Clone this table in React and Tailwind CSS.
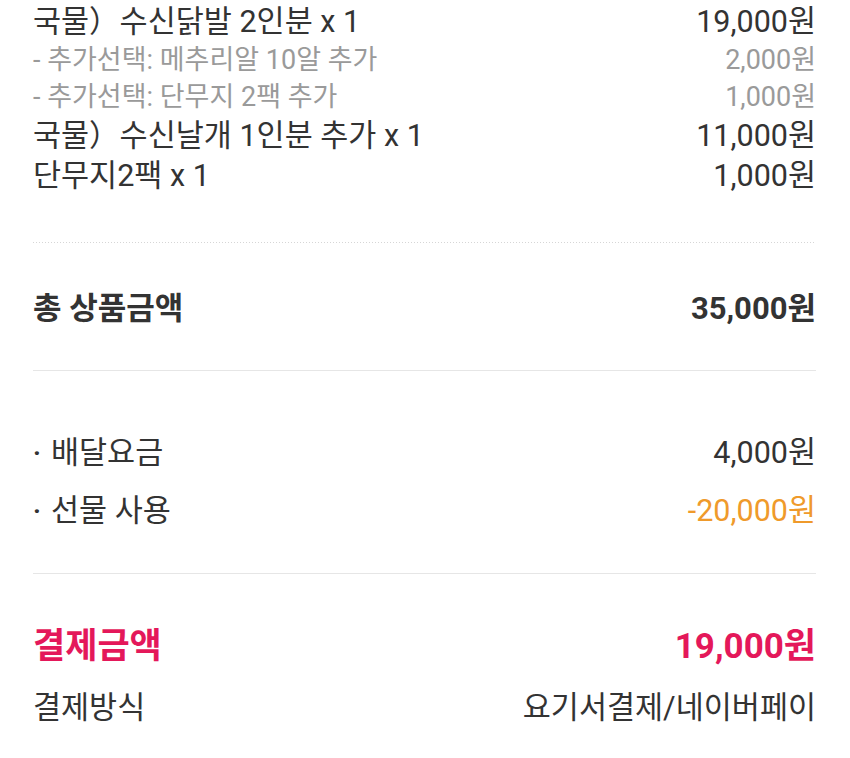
import React from 'react';

const items = [
  { name: '국물）수신닭발 2인분 x 1', price: '19,000원', options: [
    { name: '- 추가선택: 메추리알 10알 추가', price: '2,000원' },
    { name: '- 추가선택: 단무지 2팩 추가', price: '1,000원' },
  ] },
  { name: '국물）수신날개 1인분 추가 x 1', price: '11,000원', options: [] },
  { name: '단무지2팩 x 1', price: '1,000원', options: [] },
];

const Row = ({ left, right, className = '' }) => (
  <div className={`flex items-center justify-between ${className}`}>
    <span>{left}</span>
    <span>{right}</span>
  </div>
);

const Bullet = ({ children }) => (
  <span className="flex items-center">
    <span className="w-[18px] text-[26px] font-bold">·</span>
    {children}
  </span>
);

export default function App() {
  return (
    <div
      className="w-[850px] h-[758px] bg-white overflow-hidden text-[#333333]"
      style={{ fontFamily: "Roboto, 'Noto Sans CJK KR', sans-serif" }}
    >
      <div className="pl-[33px] pr-[34px]">
        {/* Order items */}
        <div className="flex flex-col pt-[2px]">
          {items.map((item, i) => (
            <div key={i} className="flex flex-col">
              <Row left={item.name} right={item.price} className="h-[40px] text-[30.5px] leading-none" />
              {item.options.map((opt, j) => (
                <Row
                  key={j}
                  left={opt.name}
                  right={opt.price}
                  className="h-[37px] text-[27px] leading-none text-[#9a9a9a]"
                />
              ))}
            </div>
          ))}
        </div>

        {/* Dotted divider */}
        <div className="mt-[46px] h-px bg-[linear-gradient(to_right,#d6d6d6_1px,transparent_1px)] bg-[length:3px_1px]" />

        {/* Total */}
        <Row left="총 상품금액" right="35,000원" className="h-[127px] pt-[4px] text-[31px] font-bold leading-none" />
        <div className="h-px bg-[#e6e6e6]" />

        {/* Fees */}
        <div className="pt-[62px] flex flex-col">
          <Row left={<Bullet>배달요금</Bullet>} right="4,000원" className="h-[40px] text-[30.5px] leading-none" />
          <Row
            left={<Bullet>선물 사용</Bullet>}
            right={<span className="text-[#ef9a2b]">-20,000원</span>}
            className="mt-[18px] h-[40px] text-[30.5px] leading-none"
          />
        </div>
        <div className="mt-[42px] h-px bg-[#e6e6e6]" />

        {/* Payment */}
        <Row
          left="결제금액"
          right="19,000원"
          className="mt-[52px] h-[40px] text-[35px] font-bold leading-none text-[#e4185a]"
        />
        <Row left="결제방식" right="요기서결제/네이버페이" className="mt-[22px] h-[40px] text-[30.5px] leading-none" />
      </div>
    </div>
  );
}
